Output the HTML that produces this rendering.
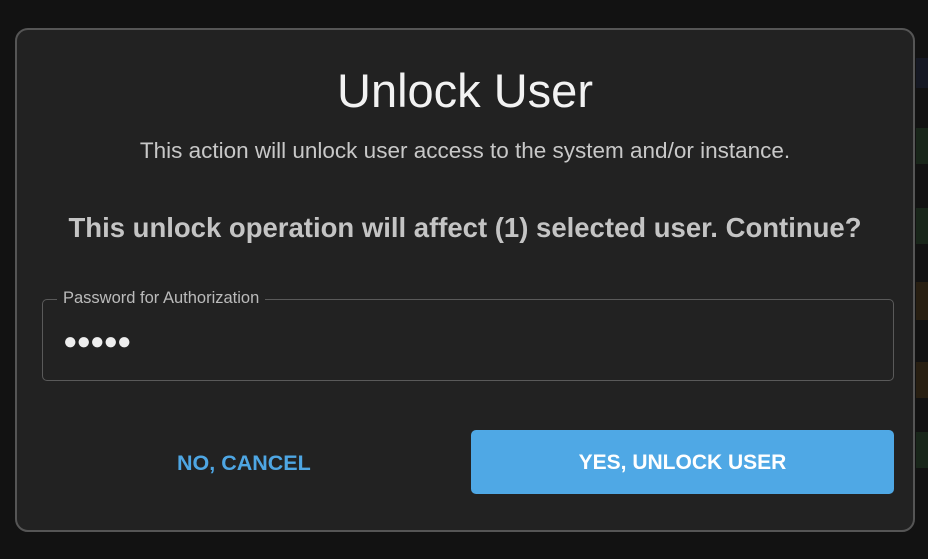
<!DOCTYPE html>
<html><head><style>
body{margin:0;width:928px;height:559px;background:#121212;position:relative;overflow:hidden;font-family:"Liberation Sans",sans-serif}
.b{position:absolute;left:916px;width:12px;opacity:.5}
.d{position:absolute;left:15px;top:28px;width:896px;height:500px;background:#222;border:2px solid #555;border-radius:13px}
.t{position:absolute;left:0;right:0;text-align:center}
</style></head><body>
<div class="b" style="top:58px;height:30px;background:#1a2036"></div>
<div class="b" style="top:128px;height:36px;background:#1f3a22"></div>
<div class="b" style="top:208px;height:36px;background:#1f3a22"></div>
<div class="b" style="top:282px;height:38px;background:#3e2c12"></div>
<div class="b" style="top:362px;height:36px;background:#3e2c12"></div>
<div class="b" style="top:432px;height:36px;background:#1f3a22"></div>
<div class="d">
<div class="t" style="top:33px;font-size:47px;color:#f2f2f2">Unlock User</div>
<div class="t" style="top:108px;font-size:22.5px;color:#c8c8c8">This action will unlock user access to the system and/or instance.</div>
<div class="t" style="top:182px;font-size:27.5px;color:#c4c4c4;font-weight:bold">This unlock operation will affect (1) selected user. Continue?</div>
<div style="position:absolute;left:25px;top:269px;width:850px;height:80px;border:1px solid #5a5a5a;border-radius:5px"></div>
<div style="position:absolute;left:40px;top:259px;background:#222;padding:0 6px;font-size:16.5px;color:#bbb">Password for Authorization</div>
<div style="position:absolute;left:46px;top:298px;font-size:24px;color:#eee;letter-spacing:-1px">●●●●●</div>
<div style="position:absolute;left:160px;top:421px;font-size:21.5px;color:#4ea6e3;font-weight:bold">NO, CANCEL</div>
<div style="position:absolute;left:454px;top:400px;width:423px;height:64px;background:#4fa8e5;border-radius:5px;color:#fff;font-weight:bold;font-size:21px;text-align:center;line-height:66px">YES, UNLOCK USER</div>
</div>
</body></html>
